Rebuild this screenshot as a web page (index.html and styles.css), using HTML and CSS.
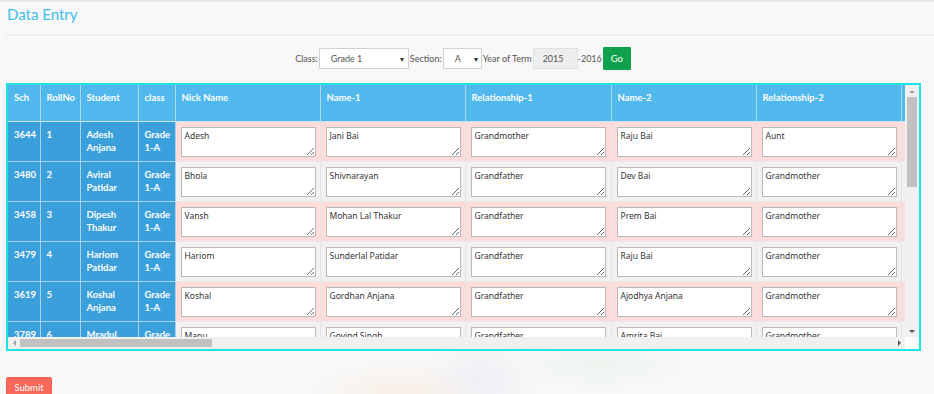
FILE: index.html
```html
<!DOCTYPE html>
<html>
<head>
<meta charset="utf-8">
<link rel="stylesheet" href="styles.css">
</head>
<body>
<div class="topband"></div>
<div class="page">
  <h1 class="title">Data Entry</h1>
  <div class="rule"></div>
  <div class="filters">
    <span class="lbl">Class:</span>
    <div class="select sel-class"><span>Grade 1</span><span class="caret">&#9662;</span></div>
    <span class="lbl">Section:</span>
    <div class="select sel-sec"><span>A</span><span class="caret">&#9662;</span></div>
    <span class="lbl">Year of Term</span>
    <div class="year">2015</div>
    <span class="lbl">-2016</span>
    <button class="go">Go</button>
  </div>

  <div class="scrollbox">
    <div class="viewport">
      <table class="grid">
        <colgroup>
          <col class="c-sch"><col class="c-roll"><col class="c-stu"><col class="c-cls">
          <col class="c-in"><col class="c-in"><col class="c-in2"><col class="c-in"><col class="c-in"><col class="c-in">
        </colgroup>
        <thead>
          <tr>
            <th>Sch</th><th>RollNo</th><th>Student</th><th>class</th>
            <th>Nick Name</th><th>Name-1</th><th>Relationship-1</th><th>Name-2</th><th>Relationship-2</th><th></th>
          </tr>
        </thead>
        <tbody>
          <tr class="pink">
            <td class="fix">3644</td><td class="fix">1</td><td class="fix">Adesh Anjana</td><td class="fix">Grade 1-A</td>
            <td><textarea>Adesh</textarea></td><td><textarea>Jani Bai</textarea></td><td><textarea>Grandmother</textarea></td><td><textarea>Raju Bai</textarea></td><td><textarea>Aunt</textarea></td><td><textarea></textarea></td>
          </tr>
          <tr class="grey">
            <td class="fix">3480</td><td class="fix">2</td><td class="fix">Aviral Patidar</td><td class="fix">Grade 1-A</td>
            <td><textarea>Bhola</textarea></td><td><textarea>Shivnarayan</textarea></td><td><textarea>Grandfather</textarea></td><td><textarea>Dev Bai</textarea></td><td><textarea>Grandmother</textarea></td><td><textarea></textarea></td>
          </tr>
          <tr class="pink">
            <td class="fix">3458</td><td class="fix">3</td><td class="fix">Dipesh Thakur</td><td class="fix">Grade 1-A</td>
            <td><textarea>Vansh</textarea></td><td><textarea>Mohan Lal Thakur</textarea></td><td><textarea>Grandfather</textarea></td><td><textarea>Prem Bai</textarea></td><td><textarea>Grandmother</textarea></td><td><textarea></textarea></td>
          </tr>
          <tr class="grey">
            <td class="fix">3479</td><td class="fix">4</td><td class="fix">Hariom Patidar</td><td class="fix">Grade 1-A</td>
            <td><textarea>Hariom</textarea></td><td><textarea>Sunderlal Patidar</textarea></td><td><textarea>Grandfather</textarea></td><td><textarea>Raju Bai</textarea></td><td><textarea>Grandmother</textarea></td><td><textarea></textarea></td>
          </tr>
          <tr class="pink">
            <td class="fix">3619</td><td class="fix">5</td><td class="fix">Koshal Anjana</td><td class="fix">Grade 1-A</td>
            <td><textarea>Koshal</textarea></td><td><textarea>Gordhan Anjana</textarea></td><td><textarea>Grandfather</textarea></td><td><textarea>Ajodhya Anjana</textarea></td><td><textarea>Grandmother</textarea></td><td><textarea></textarea></td>
          </tr>
          <tr class="grey">
            <td class="fix">3789</td><td class="fix">6</td><td class="fix">Mradul Patidar</td><td class="fix">Grade 1-A</td>
            <td><textarea>Manu</textarea></td><td><textarea>Govind Singh</textarea></td><td><textarea>Grandfather</textarea></td><td><textarea>Amrita Bai</textarea></td><td><textarea>Grandmother</textarea></td><td><textarea></textarea></td>
          </tr>
        </tbody>
      </table>
    </div>
    <div class="vscroll">
      <div class="arrow up"></div>
      <div class="vthumb"></div>
      <div class="fill"></div>
      <div class="arrow down"></div>
    </div>
    <div class="hscroll">
      <div class="arrow left"></div>
      <div class="hthumb"></div>
      <div class="fill"></div>
      <div class="arrow right"></div>
    </div>
    <div class="corner"></div>
  </div>

  <button class="submit">Submit</button>
</div>
</body>
</html>
```

FILE: styles.css
```css
html, body {
  margin: 0;
  padding: 0;
}
body {
  background-color: #f8f8f8;
  background-image:
    radial-gradient(ellipse 90px 30px at 400px 392px, rgba(250, 200, 150, 0.18), rgba(250, 200, 150, 0) 100%),
    radial-gradient(ellipse 60px 40px at 480px 380px, rgba(200, 200, 235, 0.18), rgba(200, 200, 235, 0) 100%),
    radial-gradient(ellipse 90px 25px at 600px 365px, rgba(190, 230, 200, 0.2), rgba(190, 230, 200, 0) 100%);
  font-family: Lato, "Open Sans", sans-serif;
  color: #555;
  height: 394px;
  overflow: hidden;
}
.topband {
  height: 2px;
  background: #e3e7eb;
}
.page {
  padding: 0 0 0 6px;
}
.title {
  margin: 0;
  padding: 2px 0 0 1px;
  font-size: 15px;
  line-height: 20px;
  font-weight: 400;
  color: #3dbfe9;
}
.rule {
  margin-top: 10px;
  height: 2px;
  background: #eeeeee;
}
.filters {
  margin-top: 11px;
  display: flex;
  align-items: center;
  justify-content: center;
  padding-right: 14px;
  height: 23px;
  font-size: 9px;
}
.lbl {
  color: #555;
}
.select {
  height: 21px;
  box-sizing: border-box;
  background: #fff;
  border: 1px solid #d2d2d2;
  display: flex;
  align-items: center;
  justify-content: space-between;
  color: #555;
  margin: 0 1px;
}
.sel-class {
  width: 90px;
  padding: 0 4px 0 11px;
}
.sel-sec {
  width: 39px;
  padding: 0 3px 0 11px;
}
.caret {
  font-size: 8px;
  color: #333;
}
.year {
  width: 45px;
  height: 21px;
  box-sizing: border-box;
  background: #eeeeee;
  border: 1px solid #e2e2e2;
  display: flex;
  align-items: center;
  justify-content: center;
  color: #555;
  margin-left: 1px;
  padding-right: 4px;
}
.go {
  width: 28px;
  height: 23px;
  border: none;
  background: #0fa14b;
  color: #fff;
  font-family: Lato, sans-serif;
  font-size: 9.5px;
  padding: 0;
  margin-left: 1px;
  border-radius: 1px;
}

.scrollbox {
  margin-top: 13px;
  width: max-content;
  border: 2px solid #1fe4e4;
  display: grid;
  grid-template-columns: 897px 14px;
  grid-template-rows: 252px 12px;
  background: #fff;
}
.viewport {
  overflow: hidden;
  background: #f1f1f1;
}
.grid {
  border-collapse: collapse;
  table-layout: fixed;
  width: 1038px;
  font-size: 9.5px;
}
.c-sch { width: 32px; }
.c-roll { width: 40px; }
.c-stu { width: 58px; }
.c-cls { width: 37px; }
.c-in { width: 145px; }
.c-in2 { width: 146px; }

.grid th {
  background: #51b8ed;
  color: #fff;
  font-weight: 700;
  text-align: left;
  vertical-align: top;
  padding: 6px 6px 17px;
  line-height: 13px;
  border-right: 1px solid #a9d8f3;
  border-bottom: 1px solid #cde4f0;
  white-space: nowrap;
}
.grid td {
  border-right: 1px solid #e3e3e3;
  border-bottom: 1px solid #e8e8e8;
  padding: 5px 4px 4px 5px;
  vertical-align: top;
}
.grid td.fix {
  background: #3b9fdc;
  color: #fff;
  font-weight: 700;
  line-height: 13px;
  padding: 6px 6px 0;
  border-right: 1px solid #a6d3ef;
  border-bottom: 1px solid #a6d3ef;
}
.pink td { background: #ffdcdc; }
.grey td { background: #f1f1f1; }

.grid textarea {
  display: block;
  width: 135px;
  height: 30px;
  box-sizing: border-box;
  margin: 0;
  border: 1px solid #b9b9b9;
  background: #fff;
  font-family: "Noto Sans", "Liberation Sans", sans-serif;
  font-size: 8.5px;
  line-height: 12px;
  color: #333;
  padding: 2px 3px;
  resize: both;
}

.vscroll {
  background: #f0f0f0;
  display: flex;
  flex-direction: column;
}
.hscroll {
  background: #f0f0f0;
  display: flex;
  flex-direction: row;
}
.corner {
  background: #fff;
}
.arrow {
  flex: 0 0 12px;
  display: flex;
  align-items: center;
  justify-content: center;
}
.arrow::before {
  content: "";
  width: 0;
  height: 0;
}
.up::before {
  border-left: 3px solid transparent;
  border-right: 3px solid transparent;
  border-bottom: 3px solid #a3a3a3;
}
.down::before {
  border-left: 3px solid transparent;
  border-right: 3px solid transparent;
  border-top: 3px solid #555;
}
.left::before {
  border-top: 3px solid transparent;
  border-bottom: 3px solid transparent;
  border-right: 3px solid #a3a3a3;
}
.right::before {
  border-top: 3px solid transparent;
  border-bottom: 3px solid transparent;
  border-left: 3px solid #555;
}
.vthumb {
  flex: 0 0 90px;
  margin: 0 2px 0 2px;
  background: #c1c1c1;
}
.hthumb {
  flex: 0 0 192px;
  margin: 2px 0;
  background: #c1c1c1;
}
.fill {
  flex: 1;
}

.submit {
  margin-top: 26px;
  display: block;
  width: 46px;
  height: 20px;
  border: 1px solid #f06050;
  border-radius: 2px;
  background: #f8695a;
  color: #fff;
  font-family: Lato, sans-serif;
  font-size: 9.5px;
  padding: 0;
}
```
